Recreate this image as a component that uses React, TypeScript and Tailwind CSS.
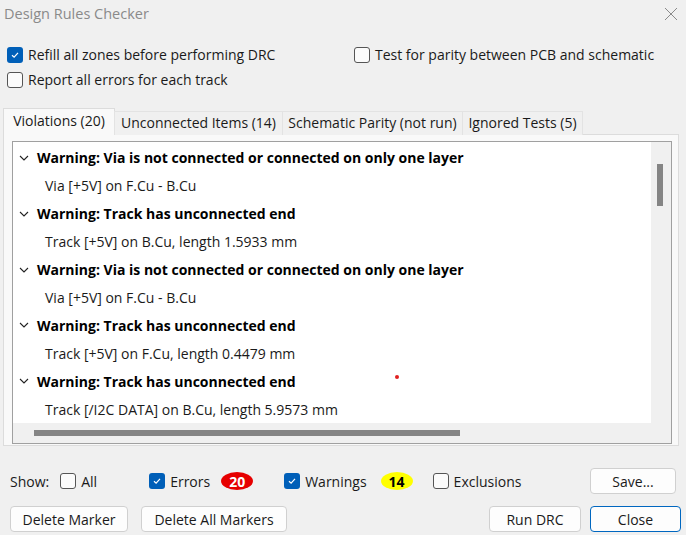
import React from 'react';

const font = { fontFamily: '"Open Sans", "Noto Sans", sans-serif' };

function Check({ checked }: { checked?: boolean }) {
  if (checked) {
    return (
      <span className="flex h-[16px] w-[16px] shrink-0 items-center justify-center rounded-[3px] bg-[#005fb8]">
        <svg width="10" height="10" viewBox="0 0 10 10">
          <path d="M2 5.2 L4.1 7.2 L8 2.8" fill="none" stroke="white" strokeWidth="1.2" />
        </svg>
      </span>
    );
  }
  return <span className="h-[16px] w-[16px] shrink-0 rounded-[3px] border border-[#555] bg-[#fbfbfb]" />;
}

function Option({ checked, label, className = '' }: { checked?: boolean; label: string; className?: string }) {
  return (
    <label className={`flex items-center gap-[5px] ${className}`}>
      <Check checked={checked} />
      <span>{label}</span>
    </label>
  );
}

function Btn({ children, className = '' }: { children: React.ReactNode; className?: string }) {
  return (
    <button
      className={`flex h-[26px] items-center justify-center rounded-[4px] border bg-[#fdfdfd] text-[#1a1a1a] ${className}`}
    >
      {children}
    </button>
  );
}

const items = [
  ['Warning: Via is not connected or connected on only one layer', 'Via [+5V] on F.Cu - B.Cu'],
  ['Warning: Track has unconnected end', 'Track [+5V] on B.Cu, length 1.5933 mm'],
  ['Warning: Via is not connected or connected on only one layer', 'Via [+5V] on F.Cu - B.Cu'],
  ['Warning: Track has unconnected end', 'Track [+5V] on F.Cu, length 0.4479 mm'],
  ['Warning: Track has unconnected end', 'Track [/I2C DATA] on B.Cu, length 5.9573 mm'],
];

const tabs = [
  { label: 'Unconnected Items (14)', w: 'w-[169px]' },
  { label: 'Schematic Parity (not run)', w: 'w-[181px]' },
  { label: 'Ignored Tests (5)', w: 'w-[121px]' },
];

export default function App() {
  return (
    <div
      className="relative flex h-[535px] w-[686px] flex-col overflow-hidden bg-[#f0f0f0] text-[14px] text-[#1a1a1a]"
      style={font}
    >
      {/* title bar */}
      <div className="flex h-[27px] items-center justify-between pl-[4px] pr-[8px]">
        <span className="text-[14.5px] text-[#8a8a8a]">Design Rules Checker</span>
        <svg width="14" height="14" viewBox="0 0 14 14">
          <path d="M1 1 L13 13 M13 1 L1 13" stroke="#8a8a8a" strokeWidth="1" />
        </svg>
      </div>

      {/* options */}
      <div className="mt-[17px] grid grid-cols-[347px_1fr] gap-y-[4px] pl-[7px]">
        <Option checked label="Refill all zones before performing DRC" />
        <Option label="Test for parity between PCB and schematic" />
        <Option label="Report all errors for each track" />
      </div>

      {/* tabs */}
      <div className="mt-[18px] flex flex-col pl-[3px] pr-[7px]">
        <div className="relative z-10 flex items-end">
          <div className="flex h-[27px] w-[112px] items-center justify-center border border-b-0 border-[#dcdcdc] bg-[#f9f9f9] pb-[3px]">
            Violations (20)
          </div>
          {tabs.map((t) => (
            <div
              key={t.label}
              className={`-ml-px flex h-[24px] items-center justify-center border border-b-0 border-[#e3e3e3] bg-[#f0f0f0] pb-[3px] ${t.w}`}
            >
              {t.label}
            </div>
          ))}
        </div>
        <div className="-mt-px h-[312px] border border-[#dcdcdc] bg-[#f9f9f9] pb-[2px] pl-[8px] pr-[6px] pt-[6px]">
          <div className="flex h-[303px] flex-col border border-[#a0a0a0] bg-[#f0f0f0]">
            <div className="flex min-h-0 flex-1">
              <div className="flex flex-1 flex-col overflow-hidden bg-white pt-[2px]">
                {items.map(([h, d], i) => (
                  <React.Fragment key={i}>
                    <div className="flex h-[28px] items-center whitespace-nowrap">
                      <svg width="12" height="12" viewBox="0 0 12 12" className="ml-[5px] mr-[7px]">
                        <path d="M2 4 L6 8 L10 4" fill="none" stroke="#222" strokeWidth="1.1" />
                      </svg>
                      <span className="font-bold text-black">{h}</span>
                    </div>
                    <div className="flex h-[28px] items-center whitespace-nowrap pl-[32px]">{d}</div>
                  </React.Fragment>
                ))}
              </div>
              <div className="w-[20px] bg-[#f0f0f0] pl-[6px] pt-[22px]">
                <div className="h-[42px] w-[6px] bg-[#858585]" />
              </div>
            </div>
            <div className="flex h-[20px] items-center pl-[21px]">
              <div className="h-[6px] w-[426px] bg-[#858585]" />
            </div>
          </div>
        </div>
      </div>

      {/* show row */}
      <div className="mt-[22px] flex h-[26px] items-center pl-[10px] pr-[10px]">
        <span className="mr-[11px]">Show:</span>
        <Option label="All" />
        <Option checked label="Errors" className="ml-[52px]" />
        <span className="ml-[11px] flex h-[18px] w-[32px] items-center justify-center rounded-[50%] bg-[#e60000] font-bold text-white">
          20
        </span>
        <Option checked label="Warnings" className="ml-[31px]" />
        <span className="ml-[14px] flex h-[18px] w-[32px] items-center justify-center rounded-[50%] bg-[#ffff00] font-bold text-black">
          14
        </span>
        <Option label="Exclusions" className="ml-[20px]" />
        <Btn className="ml-auto w-[86px] border-[#d0d0d0]">Save...</Btn>
      </div>

      {/* buttons row */}
      <div className="mt-[12px] flex items-center pl-[10px] pr-[5px]">
        <Btn className="w-[118px] border-[#d0d0d0]">Delete Marker</Btn>
        <Btn className="ml-[13px] w-[146px] border-[#d0d0d0]">Delete All Markers</Btn>
        <Btn className="ml-auto w-[92px] border-[#d0d0d0]">Run DRC</Btn>
        <Btn className="ml-[9px] w-[91px] border-[#0067c0]">Close</Btn>
      </div>

      <span className="absolute left-[395px] top-[375px] h-[4px] w-[4px] rounded-full bg-[#e02020]" />
    </div>
  );
}
